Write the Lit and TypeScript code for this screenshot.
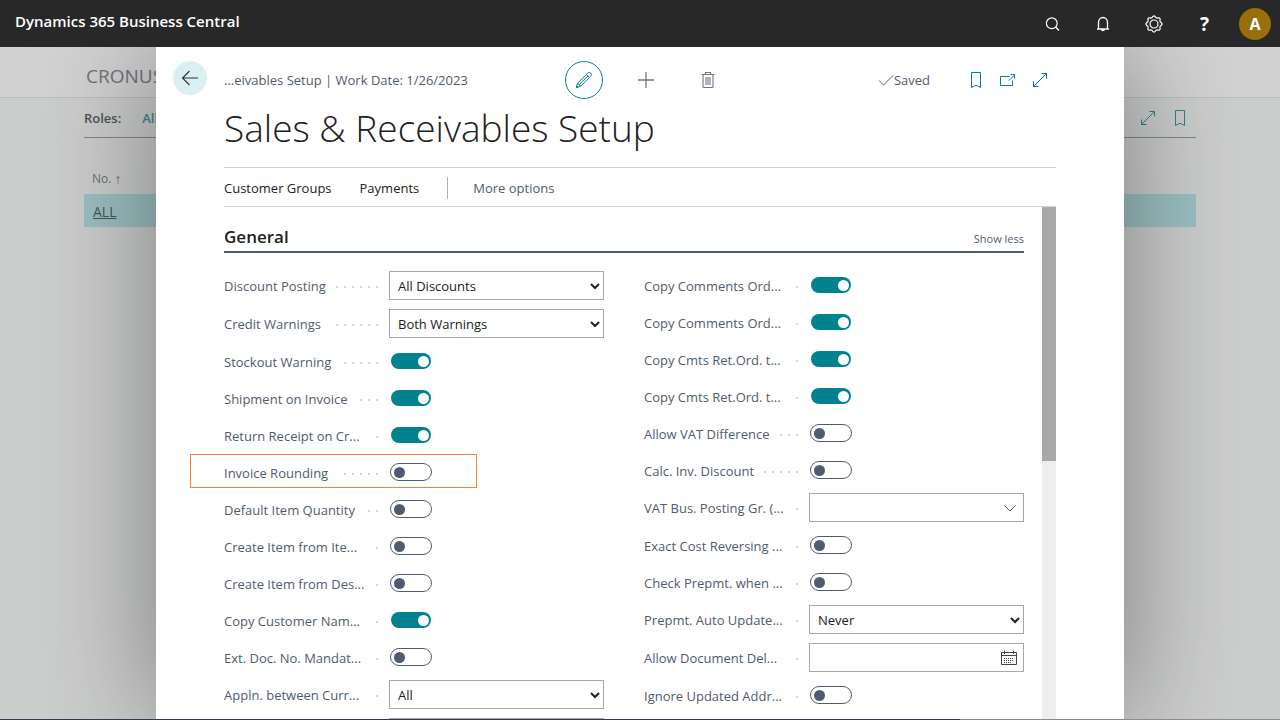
import { LitElement, html, css, svg, nothing } from "lit";
import { customElement } from "lit/decorators.js";
import { classMap } from "lit/directives/class-map.js";

type Kind = "toggle" | "select" | "lookup" | "date";
interface Field { label: string; kind: Kind; value?: string; on?: boolean; marked?: boolean }

const LEFT: Field[] = [
  { label: "Discount Posting", kind: "select", value: "All Discounts" },
  { label: "Credit Warnings", kind: "select", value: "Both Warnings" },
  { label: "Stockout Warning", kind: "toggle", on: true },
  { label: "Shipment on Invoice", kind: "toggle", on: true },
  { label: "Return Receipt on Cr...", kind: "toggle", on: true },
  { label: "Invoice Rounding", kind: "toggle", marked: true },
  { label: "Default Item Quantity", kind: "toggle" },
  { label: "Create Item from Ite...", kind: "toggle" },
  { label: "Create Item from Des...", kind: "toggle" },
  { label: "Copy Customer Nam...", kind: "toggle", on: true },
  { label: "Ext. Doc. No. Mandat...", kind: "toggle" },
  { label: "Appln. between Curr...", kind: "select", value: "All" },
  { label: "", kind: "select", value: "" },
];

const RIGHT: Field[] = [
  { label: "Copy Comments Ord...", kind: "toggle", on: true },
  { label: "Copy Comments Ord...", kind: "toggle", on: true },
  { label: "Copy Cmts Ret.Ord. t...", kind: "toggle", on: true },
  { label: "Copy Cmts Ret.Ord. t...", kind: "toggle", on: true },
  { label: "Allow VAT Difference", kind: "toggle" },
  { label: "Calc. Inv. Discount", kind: "toggle" },
  { label: "VAT Bus. Posting Gr. (...", kind: "lookup" },
  { label: "Exact Cost Reversing ...", kind: "toggle" },
  { label: "Check Prepmt. when ...", kind: "toggle" },
  { label: "Prepmt. Auto Update...", kind: "select", value: "Never" },
  { label: "Allow Document Del...", kind: "date" },
  { label: "Ignore Updated Addr...", kind: "toggle" },
];

const icon = (size: number, body: unknown) =>
  html`<svg width=${size} height=${size} viewBox="0 0 ${size} ${size}" fill="none" stroke="currentColor" aria-hidden="true">${body}</svg>`;

const gearPath = (() => {
  const pts: string[] = [];
  for (let i = 0; i <= 64; i++) {
    const a = (i / 64) * Math.PI * 2;
    const r = 7.3 + 0.8 * Math.cos(8 * a);
    pts.push(`${(9 + r * Math.sin(a)).toFixed(2)} ${(9 - r * Math.cos(a)).toFixed(2)}`);
  }
  return `M${pts.join("L")}Z`;
})();

const search = icon(18, svg`<circle cx="8.8" cy="8.3" r="5.4" stroke-width="1.2"/><path d="M12.6 12L16 15.5" stroke-width="1.3"/>`);
const bell = icon(18, svg`<path d="M4.5 14V7.5a4.5 5 0 0 1 9 0v6.5M3 14h12M7.5 14.4c.3 1.5 2.7 1.5 3 0" stroke-width="1.3"/>`);
const gear = icon(18, svg`<path d=${gearPath} stroke-width="1.2"/><circle cx="9" cy="9" r="4" stroke-width="1.2"/>`);
const back = icon(18, svg`<path d="M17 9H1.5M8.5 2L1.5 9L8.5 16" stroke-width="1.1"/>`);
const pencil = icon(18, svg`<path d="M1.2 16.8L2.6 12.2L12.8 2C14.6 .2 17.6 3 15.8 5L5.6 15.3ZM11.4 3.4L14.4 6.4M2.6 12.2L5.6 15.3M4.2 13.6L13 4.9M1.2 16.8L3 15" stroke-width="1"/>`);
const plus = icon(16, svg`<path d="M8 0V16M0 8H16" stroke-width="1.3"/>`);
const trash = icon(18, svg`<path d="M2.5 3.5H15.5M6.5 3.5V1.5H11.5V3.5M4 3.5V15.5Q4 16.5 5 16.5H13Q14 16.5 14 15.5V3.5M7 6V14M9 6V14M11 6V14" stroke-width="1.1"/>`);
const check = icon(16, svg`<path d="M1 8.5L5.5 13L15 3.5" stroke-width="1"/>`);
const bookmark = icon(18, svg`<path d="M4.5 1.5H13.5V16.5L9 14.2L4.5 16.5Z" stroke-width="1"/>`);
const popout = icon(18, svg`<path d="M10.5 5.5H1.5V14.5H13.5V9.5M10 9.5L15.5 4M11.5 3.5H15.5V7.5" stroke-width="1"/>`);
const expand = icon(18, svg`<path d="M2.5 15.5L15.5 2.5M10.5 2.5H15.5V7.5M2.5 10.5V15.5H7.5" stroke-width="1"/>`);
const chevron = icon(14, svg`<path d="M1.5 4.5L7 10L12.5 4.5" stroke-width="1"/>`);
const caret = icon(10, svg`<path d="M1 3L5 7L9 3" stroke-width="2"/>`);
const calendar = icon(16, svg`<path d="M.5 2.5H15.5V14.5H.5ZM.5 5.5H15.5M3.5 .5V4M12.5 .5V4" /><path d="M3 8.5H13M3 10.5H13M3 12.5H11" stroke-dasharray="1 1"/>`);

@customElement("setup-field")
class SetupField extends LitElement {
  static properties = { field: { attribute: false } };
  declare field: Field;

  static styles = css`
    :host { display: block; }
    .row { display: flex; position: relative; min-height: 28px; }
    .caption { display: flex; align-items: center; width: 165px; padding-right: 10px; box-sizing: border-box; height: 28px; }
    .label { color: #505c6d; white-space: nowrap; line-height: 20px; padding-top: 2px; }
    .clipped { min-width: 147px; }
    .leader { flex: 1; height: 2px; margin-top: 3px; background: linear-gradient(#d4d6d8, #d4d6d8) right 1px top / 2px 2px no-repeat; }
    .leader.long { margin-left: 10px; background: repeating-linear-gradient(to left, transparent 0 1px, #d4d6d8 1px 3px, transparent 3px 8px); }
    .control { flex: 1; min-width: 0; display: flex; align-items: center; }
    .box { flex: 1; display: flex; align-items: center; position: relative; min-width: 0; color: #212121; }
    .input { font: inherit; color: #212121; width: 100%; height: 29px; box-sizing: border-box; border: 1px solid #a6a6a6; border-radius: 0; background: #fff; padding: 0 8px; margin: 0; appearance: none; outline: none; }
    .adorn { position: absolute; right: 4px; display: flex; pointer-events: none; }
    .adorn.wide { right: 7px; color: #505c6d; }
    .adorn.date { right: 7px; color: #444; }
    .toggle { appearance: none; display: flex; box-sizing: border-box; width: 42px; height: 18px; margin: 0 0 0 1px; padding: 3px 3px 2px; border: 1px solid #505c6d; border-radius: 9px; background: #fff; }
    .toggle::before { content: ""; width: 11px; height: 11px; border-radius: 50%; background: #505c6d; }
    .toggle:checked { border-color: transparent; background: #00838f padding-box; justify-content: flex-end; padding-right: 2px; }
    .toggle:checked::before { background: #fff; }
    .mark { position: absolute; left: -34px; top: -4px; width: 287px; height: 34px; box-sizing: border-box; border: 1px solid #f5842b; pointer-events: none; }
  `;

  control(f: Field) {
    if (f.kind === "toggle") return html`<input class="toggle" id="c" type="checkbox" role="switch" ?checked=${f.on} />`;
    if (f.kind === "select")
      return html`<div class="box"><select class="input" id="c" aria-label=${f.label || "Option"}><option>${f.value}</option></select><span class="adorn">${caret}</span></div>`;
    return html`<div class="box"><input class="input" id="c" type="text" />
      <span class=${classMap({ adorn: true, wide: f.kind === "lookup", date: f.kind === "date" })}>${f.kind === "date" ? calendar : chevron}</span></div>`;
  }

  render() {
    const f = this.field;
    const clipped = f.label.endsWith("...");
    return html`<div class="row">
      <div class="caption">
        <label class=${classMap({ label: true, clipped })} for="c">${f.label}</label>
        <span class=${classMap({ leader: true, long: !clipped })}></span>
      </div>
      <div class="control">${this.control(f)}</div>
      ${f.marked ? html`<div class="mark"></div>` : nothing}
    </div>`;
  }
}

@customElement("app-root")
class AppRoot extends LitElement {
  static styles = css`
    :host { display: flex; flex-direction: column; height: 100vh; overflow: hidden; position: relative; font-family: "Open Sans", "Noto Sans", sans-serif; font-size: 13px; color: #212121; }
    svg { display: block; flex: none; }
    button { font: inherit; color: inherit; background: none; border: 0; padding: 0; margin: 0; display: flex; align-items: center; justify-content: center; white-space: nowrap; }
    a { color: inherit; }
    .top { display: flex; align-items: center; justify-content: space-between; height: 47px; flex: none; background: #282828; color: #fff; padding: 0 9px 0 15px; }
    .brand { font-size: 15px; font-weight: 600; line-height: 20px; padding-bottom: 5px; }
    .tools { display: flex; align-items: center; gap: 33px; }
    .help { font-size: 19px; font-weight: 700; width: 17px; }
    .avatar { width: 32px; height: 32px; border-radius: 50%; background: #986f0b; font-size: 16px; font-weight: 700; margin-left: -7px; }
    .stage { flex: 1; min-height: 0; position: relative; display: flex; flex-direction: column; background: #cccdcd; }
    .company { height: 51px; flex: none; border-bottom: 1px solid #bbbdbd; background: #d2d2d2; padding-left: 86px; font-size: 19px; line-height: 58px; color: #6f747c; box-sizing: border-box; }
    .list { padding: 0 84px; display: flex; flex-direction: column; }
    .filter { display: flex; align-items: center; height: 39px; border-bottom: 1px solid #858787; font-weight: 600; gap: 21px; color: #505356; }
    .filter .value { color: #3a8a90; flex: 1; }
    .filter .acts { display: flex; gap: 14px; color: #2f8288; padding-right: 7px; }
    .th { display: flex; gap: 3px; font-size: 12px; color: #6d7073; padding: 33px 8px 7px; line-height: 16px; }
    .sort { font-size: 14px; }
    .tr { height: 33px; display: flex; align-items: center; padding: 2px 9px 0; box-sizing: border-box; background: #9cc0c2; color: #4b5557; font-size: 14px; }
    .dialog { position: absolute; inset: 0 156px; background: #fff; display: flex; flex-direction: column; box-shadow: 0 0 110px rgba(0, 0, 0, .4); padding: 0 68px; clip-path: inset(0 -160px 0 -160px); }
    .bar { display: flex; align-items: center; height: 66px; flex: none; margin-left: -51px; color: #505c6d; }
    .back { width: 34px; height: 34px; border-radius: 50%; background: #d9eff2; color: #333; margin: 0 17px 4px 0; }
    .crumb { flex: 0 0 341px; white-space: nowrap; }
    .mid { display: flex; align-items: center; gap: 24px; color: #6d7784; }
    .mid button { width: 38px; height: 38px; box-sizing: border-box; }
    .mid .edit { border: 1px solid #00838f; border-radius: 50%; color: #00838f; }
    .right { flex: 1; display: flex; align-items: center; justify-content: flex-end; gap: 14px; color: #00838f; padding-right: 7px; }
    .saved { display: flex; align-items: center; color: #505c6d; margin-right: 23px; }
    h1 { font-size: 37px; line-height: 48px; font-weight: 300; margin: -9px 0 15px; color: #212121; white-space: nowrap; }
    .actions { display: flex; align-items: center; height: 36px; flex: none; border: solid #d0d3d6; border-width: 1px 0; gap: 28px; padding-top: 2px; }
    .more { border-left: 1px solid #a9b0b8; padding: 2px 0 2px 25px; color: #505c6d; }
    .body { flex: 1; min-height: 0; display: flex; gap: 18px; }
    .form { flex: 1; min-width: 0; }
    .head { display: flex; align-items: flex-end; justify-content: space-between; height: 44px; border-bottom: 2px solid #505c6d; margin-bottom: 18px; }
    h2 { font-size: 17px; line-height: 24px; font-weight: 600; margin: 0 0 2px; }
    .less { font-size: 11px; line-height: 16px; color: #505c6d; margin-bottom: 4px; }
    .cols { display: grid; grid-template-columns: 1fr 1fr; gap: 40px; }
    .col { display: flex; flex-direction: column; gap: 9px; }
    .track { width: 14px; background: #eee; }
    .thumb { height: 254px; background: #a9a9a9; }
    .edge { position: absolute; left: 0; right: 0; bottom: 0; height: 1px; background: linear-gradient(to right, #2f3b50 0 75%, #8c8c8c 75%); }
  `;

  render() {
    const col = (fs: Field[]) => html`<div class="col">${fs.map((f) => html`<setup-field .field=${f}></setup-field>`)}</div>`;
    return html`
      <header class="top">
        <div class="brand">Dynamics 365 Business Central</div>
        <div class="tools">
          <button aria-label="Search">${search}</button>
          <button aria-label="Notifications">${bell}</button>
          <button aria-label="Settings">${gear}</button>
          <button class="help">?</button>
          <button class="avatar">A</button>
        </div>
      </header>
      <div class="stage">
        <div class="company">CRONUS</div>
        <div class="list">
          <div class="filter"><span>Roles:</span><span class="value">All</span><span class="acts">${expand}${bookmark}</span></div>
          <div class="th"><span>No.</span><span class="sort">↑</span></div>
          <div class="tr"><a href="#all">ALL</a></div>
        </div>
        <main class="dialog">
          <div class="bar">
            <button class="back" aria-label="Back">${back}</button>
            <span class="crumb">...eivables Setup | Work Date: 1/26/2023</span>
            <div class="mid">
              <button class="edit" aria-label="Edit">${pencil}</button>
              <button aria-label="New">${plus}</button>
              <button aria-label="Delete">${trash}</button>
            </div>
            <div class="right">
              <span class="saved">${check}Saved</span>
              <button aria-label="Bookmark">${bookmark}</button>
              <button aria-label="Open in new window">${popout}</button>
              <button aria-label="Expand">${expand}</button>
            </div>
          </div>
          <h1>Sales &amp; Receivables Setup</h1>
          <nav class="actions">
            <button>Customer Groups</button>
            <button>Payments</button>
            <button class="more">More options</button>
          </nav>
          <div class="body">
            <section class="form">
              <div class="head"><h2>General</h2><button class="less">Show less</button></div>
              <div class="cols">${col(LEFT)}${col(RIGHT)}</div>
            </section>
            <div class="track"><div class="thumb"></div></div>
          </div>
        </main>
      </div>
      <div class="edge"></div>
    `;
  }
}
